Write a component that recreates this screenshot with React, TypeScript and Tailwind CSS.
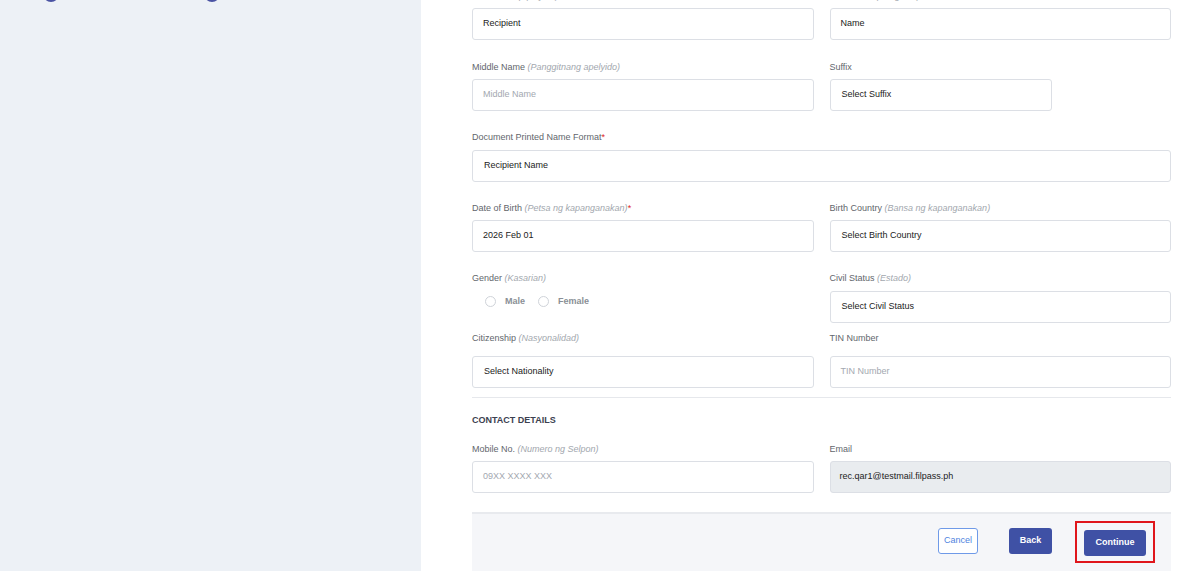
const font = { fontFamily: '"Liberation Sans", Arial, sans-serif' };

function Label({ text, hint, required }: { text: string; hint?: string; required?: boolean }) {
  return (
    <div className="h-3 text-[9px] leading-3 text-[#62666c] whitespace-nowrap">
      {text}
      {hint && <span className="italic text-[#a2a7ae]"> {hint}</span>}
      {required && <span className="text-[#e02424]">*</span>}
    </div>
  );
}

function Box({
  value,
  placeholder,
  disabled,
  className = "",
}: {
  value?: string;
  placeholder?: string;
  disabled?: boolean;
  className?: string;
}) {
  return (
    <div
      className={`h-8 flex items-center rounded-[3px] border border-[#dcdfe5] text-[9px] ${
        disabled ? "bg-[#e9ecef] px-[9px]" : "bg-white px-[10px]"
      } ${value ? "text-[#222]" : "text-[#a3a8b0]"} ${className}`}
    >
      {value ?? placeholder}
    </div>
  );
}

function Radio({ label }: { label: string }) {
  return (
    <div className="flex items-center gap-[9px]">
      <span className="w-[11px] h-[11px] rounded-full border border-[#cfd3d9] bg-white" />
      <span className="text-[9px] font-bold text-[#8a8f96]">{label}</span>
    </div>
  );
}

export default function App() {
  return (
    <div className="flex h-[571px] w-[1200px] overflow-hidden" style={font}>
      <aside className="w-[421px] shrink-0 bg-[#edf1f6]">
        <div className="-mt-[14px] flex gap-[145px] pl-[43px]">
          <span className="w-4 h-4 rounded-full border-2 border-[#4a53a3]" />
          <span className="w-4 h-4 rounded-full border-2 border-[#4a53a3]" />
        </div>
      </aside>

      <main className="flex-1 bg-white pl-[51px] pr-[29px]">
        <div className="-mt-[10px]">
          {/* name */}
          <div className="grid grid-cols-2 gap-x-4">
            <div>
              <Label text="Last Name" hint="(Apelyido)" required />
              <Box value="Recipient" className="mt-[6px]" />
            </div>
            <div>
              <Label text="First Name" hint="(Pangalan)" required />
              <Box value="Name" className="mt-[6px]" />
            </div>
          </div>

          <div className="grid grid-cols-2 gap-x-4 mt-[21px]">
            <div>
              <Label text="Middle Name" hint="(Panggitnang apelyido)" />
              <Box placeholder="Middle Name" className="mt-[6px] px-[9px]" />
            </div>
            <div>
              <Label text="Suffix" />
              <Box value="Select Suffix" className="mt-[6px] w-[222px] px-[11px]" />
            </div>
          </div>

          <div className="mt-5">
            <Label text="Document Printed Name Format" required />
            <Box value="Recipient Name" className="mt-[7px] px-[11px]" />
          </div>

          <div className="grid grid-cols-2 gap-x-4 mt-5">
            <div>
              <Label text="Date of Birth" hint="(Petsa ng kapanganakan)" required />
              <Box value="2026 Feb 01" className="mt-[6px] px-[9px]" />
            </div>
            <div>
              <Label text="Birth Country" hint="(Bansa ng kapanganakan)" />
              <Box value="Select Birth Country" className="mt-[6px] px-[11px]" />
            </div>
          </div>

          <div className="grid grid-cols-2 gap-x-4 mt-5">
            <div>
              <Label text="Gender" hint="(Kasarian)" />
              <div className="flex gap-[13px] pl-[13px] mt-[11px]">
                <Radio label="Male" />
                <Radio label="Female" />
              </div>
            </div>
            <div>
              <Label text="Civil Status" hint="(Estado)" />
              <Box value="Select Civil Status" className="mt-[7px] px-[11px]" />
            </div>
          </div>

          <div className="grid grid-cols-2 gap-x-4 mt-[9px]">
            <div>
              <Label text="Citizenship" hint="(Nasyonalidad)" />
              <Box value="Select Nationality" className="mt-3 px-[11px]" />
            </div>
            <div>
              <Label text="TIN Number" />
              <Box placeholder="TIN Number" className="mt-3 px-[9px]" />
            </div>
          </div>

          <div className="mt-[9px] border-t border-[#e6e8ec]" />

          {/* contact */}
          <div className="mt-4 h-3 text-[9px] leading-3 font-bold text-[#3c4150]">CONTACT DETAILS</div>

          <div className="grid grid-cols-2 gap-x-4 mt-[17px]">
            <div>
              <Label text="Mobile No." hint="(Numero ng Selpon)" />
              <Box placeholder="09XX XXXX XXX" className="mt-[6px] px-[9px]" />
            </div>
            <div>
              <Label text="Email" />
              <Box value="rec.qar1@testmail.filpass.ph" disabled className="mt-[6px]" />
            </div>
          </div>

          {/* actions */}
          <div className="mt-[19px] h-[80px] bg-[#f5f6f9] border-t-2 border-[#e8eaee] flex justify-end items-start pt-[7px] pr-4">
            <button className="mt-[7px] h-[26px] w-10 rounded-[3px] border border-[#6f9ae8] bg-white text-[9px] text-[#4f83e0]">
              Cancel
            </button>
            <button className="ml-[31px] mt-[7px] h-[26px] w-[43px] rounded-[3px] bg-[#3f51a5] text-[9px] font-bold text-white">
              Back
            </button>
            <div className="ml-[23px] border-2 border-[#e0161c] px-[7px] py-[5px]">
              <button className="h-[26px] w-[62px] rounded-[3px] bg-[#3f51a5] text-[9px] font-bold text-white">
                Continue
              </button>
            </div>
          </div>
        </div>
      </main>
    </div>
  );
}
